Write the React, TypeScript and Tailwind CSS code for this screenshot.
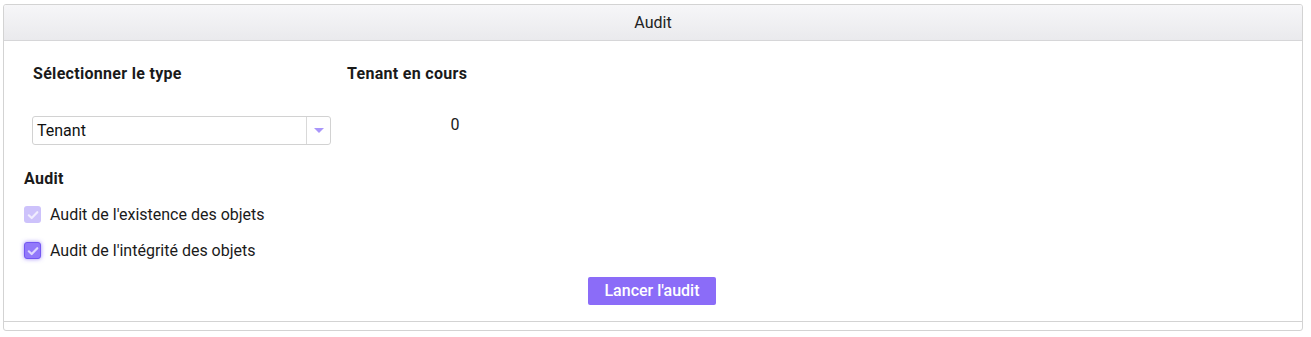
import React from 'react';

const Check = () => (
  <svg viewBox="0 0 12 12" className="w-[12px] h-[12px]" fill="none">
    <path d="M1.8 6.3 L4.7 9 L10.3 3.2" stroke="rgba(255,255,255,0.7)" strokeWidth="2.2" strokeLinecap="round" strokeLinejoin="round" />
  </svg>
);

export default function App() {
  return (
    <div className="bg-white h-[337px] pt-[4px] pl-[3px]" style={{ fontFamily: 'Roboto, "Liberation Sans", sans-serif' }}>
      <div className="w-[1300px] border border-[#d3d3d3] rounded-[3px] overflow-hidden">
        {/* Header */}
        <div className="h-[36px] flex items-center justify-center border-b border-[#d6d6d8] bg-gradient-to-b from-[#f6f6f8] to-[#eaeaed] text-[16px] text-[#222]">
          Audit
        </div>

        {/* Body */}
        <div className="h-[280px] pl-[20px] pt-[23px] text-[16px] text-[#1a1a1a]">
          <div className="flex pl-[8px]">
            <div className="w-[299px]">
              <div className="h-[20px] font-bold leading-[20px] pl-[1px] tracking-[0.3px]">Sélectionner le type</div>
              <div className="mt-[32px] h-[29px] flex border border-[#d2d2d2] rounded-[3px] bg-white">
                <div className="flex-1 flex items-center pl-[4px] text-[#111]">Tenant</div>
                <div className="w-[24px] border-l border-[#d9d9d9] flex items-center justify-center">
                  <div className="w-0 h-0 border-l-[5px] border-r-[5px] border-t-[5px] border-l-transparent border-r-transparent border-t-[#a996fa]" />
                </div>
              </div>
            </div>
            <div className="w-[218px] ml-[16px]">
              <div className="h-[20px] font-bold leading-[20px] tracking-[0.3px]">Tenant en cours</div>
              <div className="mt-[31px] text-center leading-[20px] pr-[2px]">0</div>
            </div>
          </div>

          <div className="mt-[24px] h-[20px] leading-[20px] font-bold tracking-[0.3px]">Audit</div>

          <div className="mt-[17px] flex items-center gap-[9px] h-[17px]">
            <div className="w-[17px] h-[17px] rounded-[3px] bg-[#cdc2fb] flex items-center justify-center">
              <Check />
            </div>
            <span className="leading-[17px]">Audit de l'existence des objets</span>
          </div>

          <div className="mt-[19px] flex items-center gap-[9px] h-[17px]">
            <div className="w-[17px] h-[17px] rounded-[3px] bg-[#9279fa] border border-[#7457f2] shadow-[0_0_4px_rgba(120,90,245,0.7)] flex items-center justify-center">
              <Check />
            </div>
            <span className="leading-[17px]">Audit de l'intégrité des objets</span>
          </div>

          <div className="flex justify-center mt-[18px] pr-[22px]">
            <button className="w-[128px] h-[28px] rounded-[2px] bg-[#8b6cf8] text-white font-medium text-[16px]">
              Lancer l'audit
            </button>
          </div>
        </div>

        {/* Footer */}
        <div className="h-[9px] border-t border-[#d3d3d3]" />
      </div>
    </div>
  );
}
